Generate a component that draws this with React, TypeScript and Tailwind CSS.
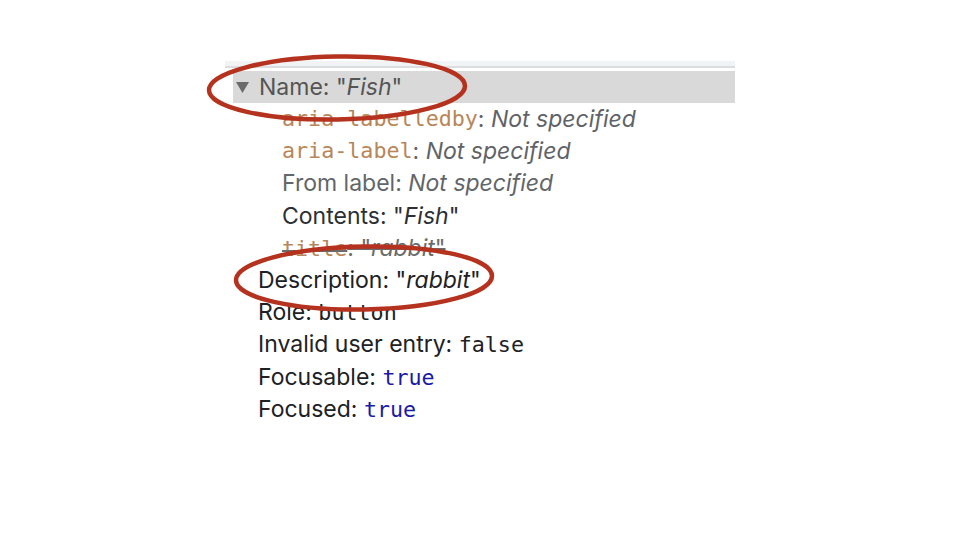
import React from "react";

const sans = { fontFamily: 'Inter, "Liberation Sans", Arial, sans-serif' };
const mono = { fontFamily: '"DejaVu Sans Mono", "Liberation Mono", monospace' };

function Row({ indent, children, className = "" }: { indent: number; children: React.ReactNode; className?: string }) {
  return (
    <div className={`flex items-center h-[32.2px] whitespace-nowrap ${className}`} style={{ paddingLeft: indent }}>
      {children}
    </div>
  );
}

export default function App() {
  return (
    <div className="relative w-[960px] h-[540px] bg-white overflow-hidden text-[23px]" style={sans}>
      <div className="ml-[225px] mt-[61px] w-[510px] flex flex-col">
        <div className="h-[7px] bg-[#f2f3f5] border-b-2 border-[#dcdde0]" />
        <div className="h-[3px]" />
        <div className="ml-[8px] bg-[#d9d9d9]">
          <Row indent={3} className="text-[#545454]">
            <svg width="13" height="11" viewBox="0 0 13 11" className="mr-[10px]">
              <path d="M0 0 L13 0 L6.5 11 Z" fill="#6b6b6b" />
            </svg>
            <span>Name: "<i>Fish</i>"</span>
          </Row>
        </div>
        <Row indent={57}>
          <span className="text-[#b98659] text-[21.7px]" style={mono}>aria-labelledby</span>
          <span className="text-[#5f6368]">: <i>Not specified</i></span>
        </Row>
        <Row indent={57}>
          <span className="text-[#b98659] text-[21.7px]" style={mono}>aria-label</span>
          <span className="text-[#5f6368]">: <i>Not specified</i></span>
        </Row>
        <Row indent={57} className="text-[#62656a]">
          <span>From label: <i>Not specified</i></span>
        </Row>
        <Row indent={57} className="text-[#2b2f36]">
          <span>Contents: "<i>Fish</i>"</span>
        </Row>
        <Row indent={57}>
          <span className="line-through decoration-[#6b6b6b]">
            <span className="text-[#b98659] text-[21.7px]" style={mono}>title</span>
            <span className="text-[#6b6b6b]">: "<i>rabbit</i>"</span>
          </span>
        </Row>
        <Row indent={33} className="text-[#202124]">
          <span>Description: "<i>rabbit</i>"</span>
        </Row>
        <Row indent={33} className="text-[#202124]">
          <span>Role: <span className="text-[21.7px]" style={mono}>button</span></span>
        </Row>
        <Row indent={33} className="text-[#202124]">
          <span>Invalid user entry: <span className="text-[21.7px]" style={mono}>false</span></span>
        </Row>
        <Row indent={33} className="text-[#202124]">
          <span>Focusable: <span className="text-[21.7px] text-[#1a1aa6]" style={mono}>true</span></span>
        </Row>
        <Row indent={33} className="text-[#202124]">
          <span>Focused: <span className="text-[21.7px] text-[#1a1aa6]" style={mono}>true</span></span>
        </Row>
      </div>
      <svg className="absolute left-0 top-0 pointer-events-none" width="960" height="540">
        <ellipse cx="337" cy="88" rx="128" ry="31.5" fill="none" stroke="#b5321e" strokeWidth="4.5" transform="rotate(-1 337 88)" />
        <ellipse cx="364" cy="278" rx="128" ry="31.5" fill="none" stroke="#b5321e" strokeWidth="4.5" transform="rotate(-1 364 278)" />
      </svg>
    </div>
  );
}
